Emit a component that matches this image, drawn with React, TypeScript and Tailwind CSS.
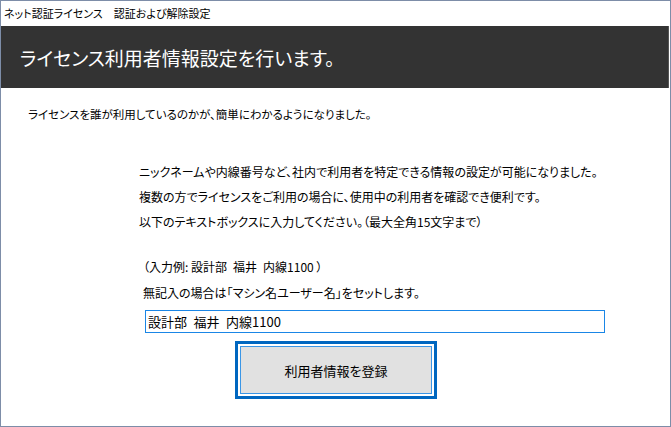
const App = () => {
  return (
    <div className="w-[671px] h-[427px] border border-[#7d8da8] bg-white flex flex-col text-black font-['Noto_Sans_CJK_JP','Noto_Sans',sans-serif] [font-feature-settings:'palt']">
      <div className="h-[25px] pl-[3px] flex items-center text-[11px] leading-none">
        ネット認証ライセンス　認証および解除設定
      </div>

      <div className="h-[62px] mr-[1px] bg-[#333333] border-r border-[#555555] flex items-center px-[19px]">
        <h1 className="text-white text-[19px] leading-none">
          ライセンス利用者情報設定を行います。
        </h1>
      </div>

      <p className="mt-[16px] pl-[27px] text-[11.5px] leading-[20px]">
        ライセンスを誰が利用しているのかが、簡単にわかるようになりました。
      </p>

      <div className="mt-[35px] pl-[138px] text-[12px] leading-[25px]">
        <p>ニックネームや内線番号など、社内で利用者を特定できる情報の設定が可能になりました。</p>
        <p>複数の方でライセンスをご利用の場合に、使用中の利用者を確認でき便利です。</p>
        <p>以下のテキストボックスに入力してください。（最大全角15文字まで）</p>
      </div>

      <div className="mt-[20px] pl-[142px] text-[12px] leading-[26px]">
        <p>（入力例: 設計部{"\u2002"}福井{"\u2002"}内線1100 ）</p>
        <p>無記入の場合は「マシン名ユーザー名」をセットします。</p>
      </div>

      <div className="mt-[4px] ml-[144px] w-[460px] h-[23px] border border-[#1a86e6] flex items-center px-[2px] text-[13px] leading-none">
        設計部{"\u2002"}福井{"\u2002"}内線1100
      </div>

      <div className="mt-[8px] ml-[234px] w-[202px] h-[58px] border-[3px] border-[#0067c0] bg-white p-[2px]">
        <button className="w-full h-full border border-[#3a96e6] bg-[#e1e1e1] text-[13px] leading-none flex items-center justify-center">
          利用者情報を登録
        </button>
      </div>
    </div>
  )
}

export default App
